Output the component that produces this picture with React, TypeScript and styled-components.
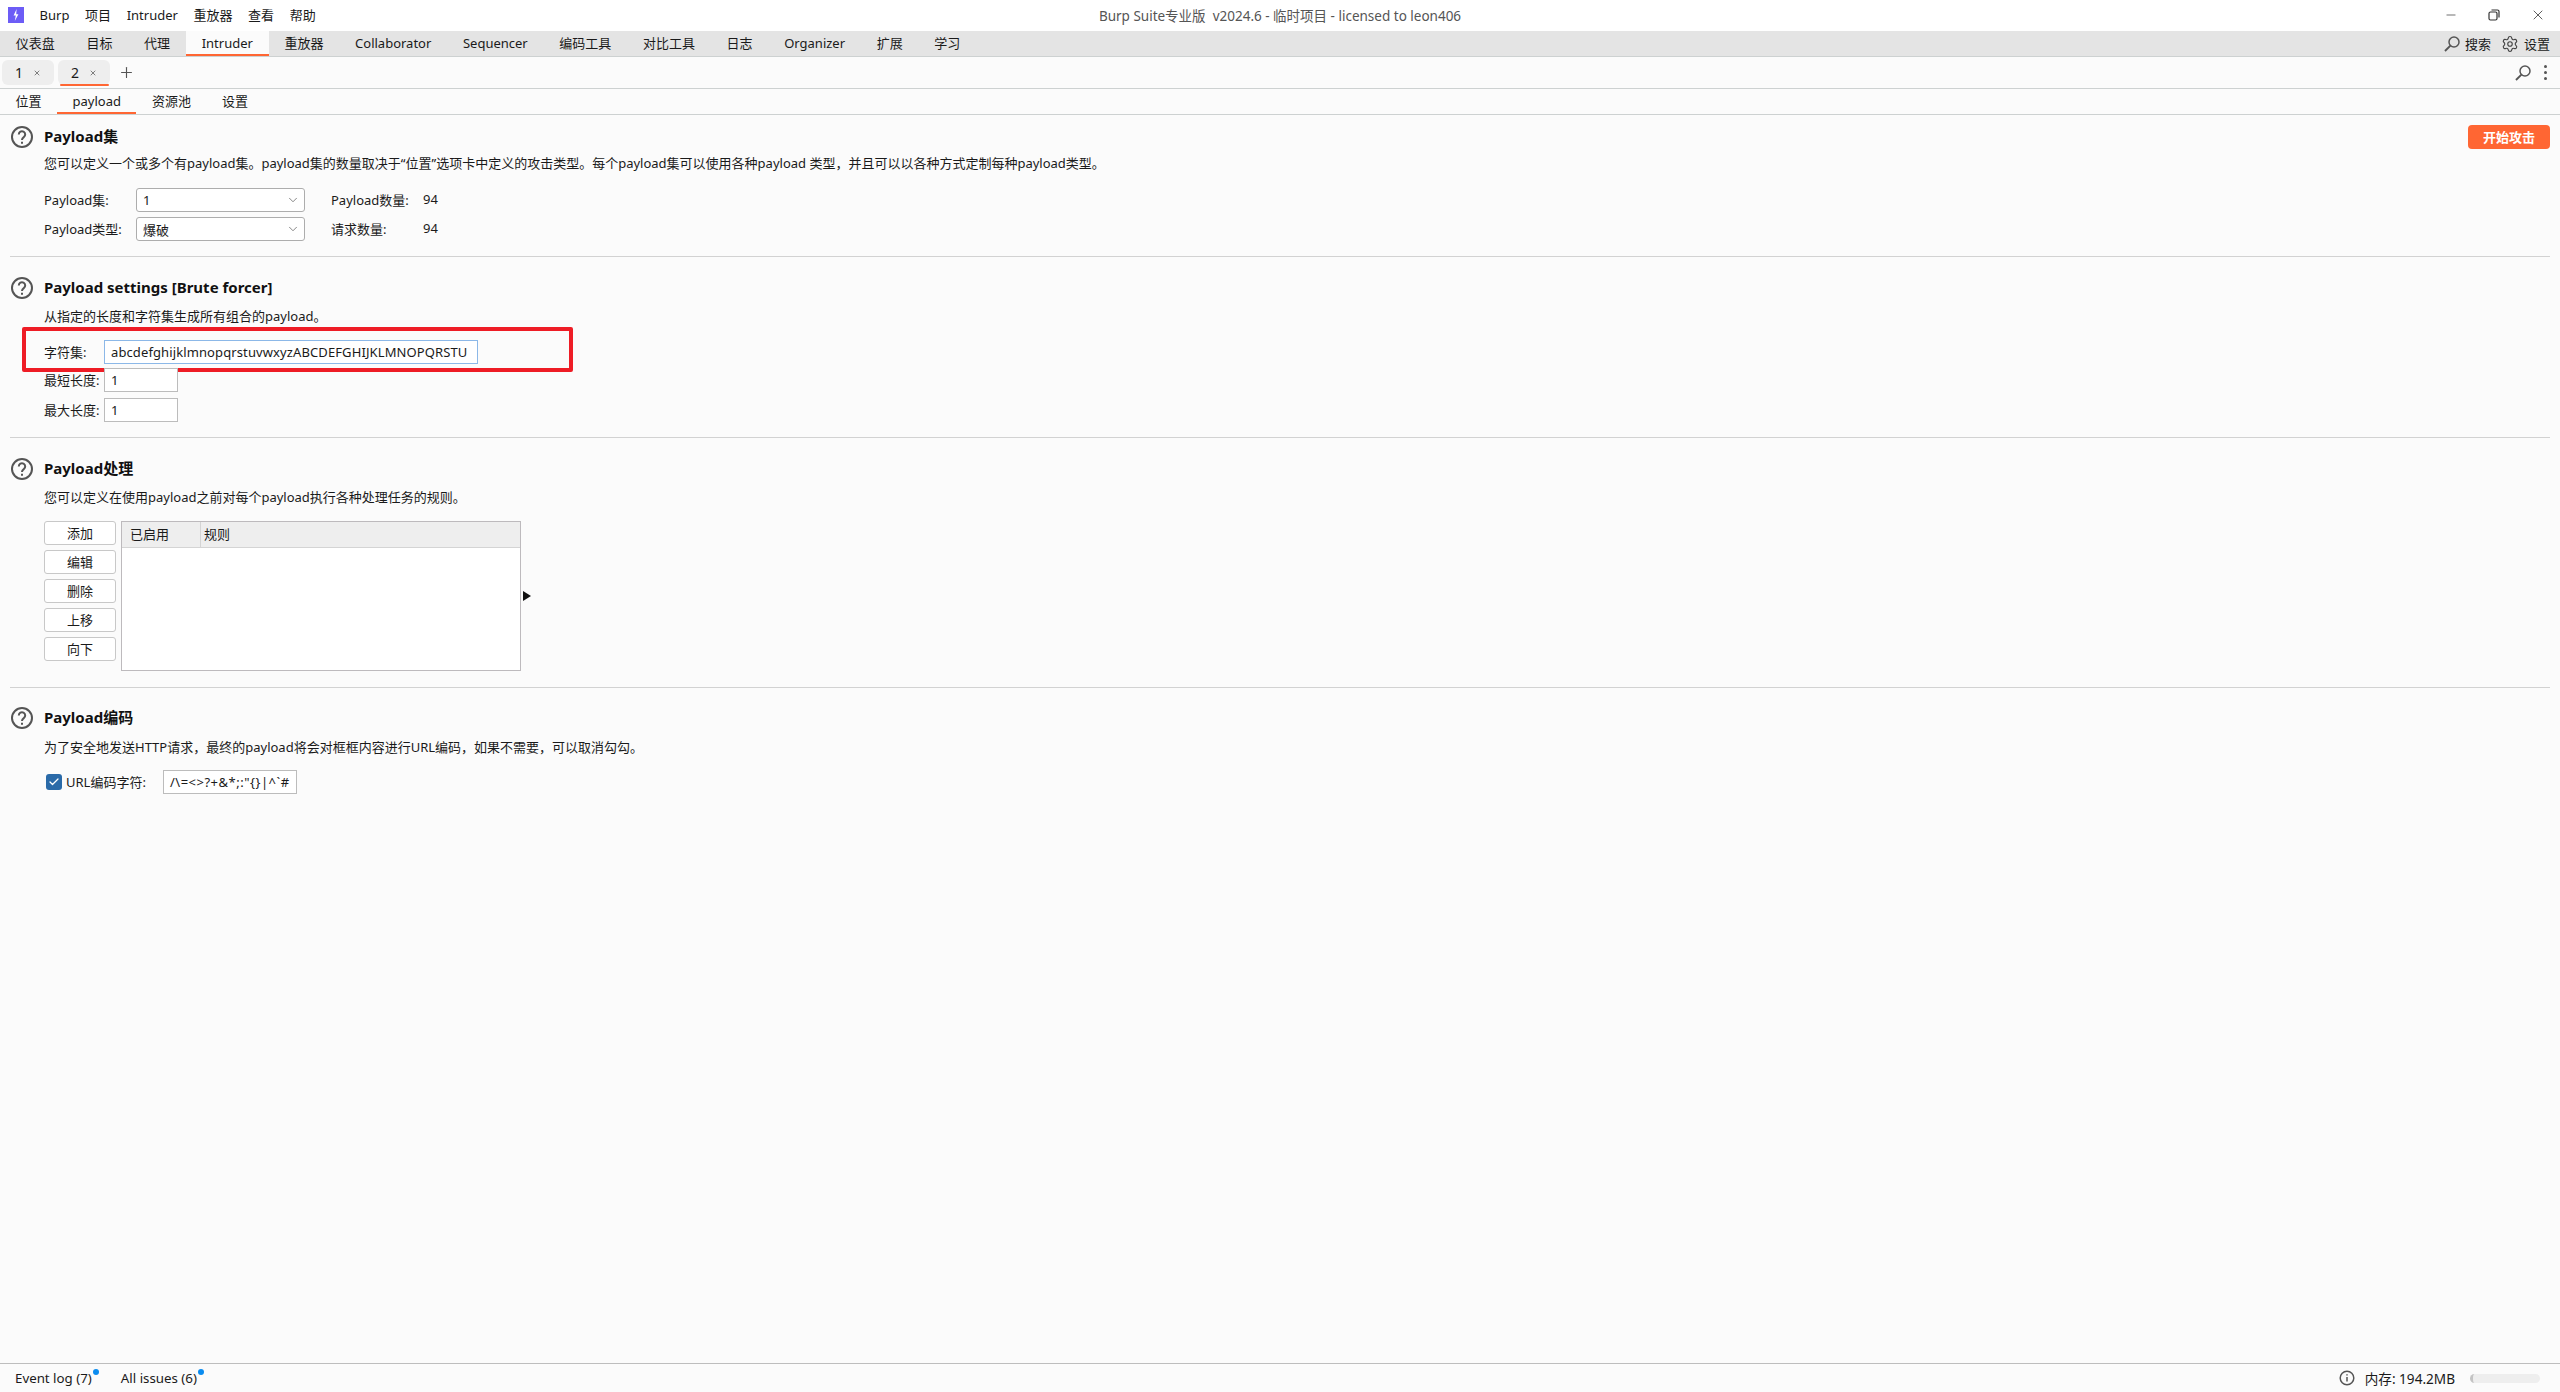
import styled, { createGlobalStyle } from "styled-components"
import { Check, ChevronDown, Minus, Plus, Settings, X } from "lucide-react"

const GlobalStyle = createGlobalStyle`
  html, body {
    margin: 0;
    padding: 0;
    background: #fbfbfb;
  }
  * {
    box-sizing: border-box;
  }
`

const Window = styled.div`
  display: flex;
  flex-direction: column;
  width: 2560px;
  height: 1392px;
  overflow: hidden;
  background: #fbfbfb;
  color: #1a1a1a;
  font-family: "Noto Sans", "Noto Sans CJK SC", sans-serif;
  font-size: 13px;
`

const TitleBar = styled.div`
  display: grid;
  grid-template-columns: 1fr auto 1fr;
  align-items: center;
  height: 31px;
  padding-bottom: 2px;
  background: #ffffff;
`

const MenuGroup = styled.div`
  display: flex;
  align-items: center;
  gap: 15.6px;
  padding-left: 8px;
`

const Logo = styled.svg`
  width: 16px;
  height: 16px;
`

const MenuItem = styled.span``

const WindowTitle = styled.div`
  color: #555555;
  font-size: 13.5px;
  white-space: pre;
`

const WindowControls = styled.div`
  display: flex;
  justify-content: flex-end;
  align-items: center;
  gap: 28px;
  padding-right: 14px;
  color: #333333;
`

const RestoreIcon = styled.svg`
  width: 16px;
  height: 16px;
`

const NavBar = styled.div`
  display: flex;
  align-items: stretch;
  height: 26px;
  background: #e4e4e4;
  border-bottom: 1px solid #cdd1d1;
`

const NavTab = styled.div<{ $active?: boolean }>`
  display: flex;
  align-items: center;
  padding: 0 15.8px;
  background: ${(p) => (p.$active ? "#fbfbfb" : "transparent")};
  border-bottom: 2px solid ${(p) => (p.$active ? "#ff6633" : "transparent")};
`

const NavActions = styled.div`
  display: flex;
  align-items: center;
  gap: 10px;
  margin-left: auto;
  padding-right: 10px;
`

const NavAction = styled.div`
  display: flex;
  align-items: center;
  gap: 5px;
`

const SearchSvg = styled.svg`
  width: 16px;
  height: 16px;
`

const GearIcon = styled(Settings)`
  color: #444444;
`

const TabRow = styled.div`
  display: flex;
  align-items: center;
  height: 32px;
  padding-left: 2px;
  border-bottom: 1px solid #cdd1d1;
`

const RepeatTab = styled.div<{ $active?: boolean }>`
  position: relative;
  display: flex;
  align-items: center;
  justify-content: center;
  gap: 10px;
  width: 52px;
  height: 25px;
  margin-right: 4px;
  background: #eeeeee;
  border-radius: 6px;
  font-size: 14px;
  &::after {
    content: "";
    display: ${(p) => (p.$active ? "block" : "none")};
    position: absolute;
    left: 2px;
    right: 1px;
    bottom: -1px;
    height: 2px;
    border-radius: 1px;
    background: #ff6633;
  }
`

const TabClose = styled(X)`
  color: #444444;
`

const AddTab = styled(Plus)`
  margin-left: 4px;
  color: #555555;
`

const RowActions = styled.div`
  display: flex;
  align-items: center;
  gap: 13px;
  margin-left: auto;
  padding-right: 13px;
`

const MoreDots = styled.div`
  display: flex;
  flex-direction: column;
  gap: 3px;
  span {
    width: 3px;
    height: 3px;
    border-radius: 50%;
    background: #555555;
  }
`

const SubTabRow = styled.div`
  display: flex;
  align-items: stretch;
  height: 26px;
  border-bottom: 1px solid #cdd1d1;
`

const SubTab = styled.div<{ $active?: boolean }>`
  display: flex;
  align-items: center;
  padding: 0 15.5px;
  border-bottom: 2px solid ${(p) => (p.$active ? "#ff6633" : "transparent")};
`

const Main = styled.div`
  flex: 1;
  min-height: 0;
`

const Section = styled.section<{ $top: number; $bottom: number }>`
  display: grid;
  grid-template-columns: 34px 1fr;
  margin: 0 10px;
  padding: ${(p) => p.$top}px 0 ${(p) => p.$bottom}px;
  border-bottom: 1px solid #d2d2d2;
`

const NoDivider = styled(Section)`
  border-bottom: none;
`

const HelpSvg = styled.svg`
  width: 24px;
  height: 24px;
  margin-top: -2px;
`

const SectionBody = styled.div`
  display: flex;
  flex-direction: column;
`

const TitleLine = styled.div`
  display: flex;
  justify-content: space-between;
  align-items: flex-start;
  height: 20px;
`

const SectionTitle = styled.div`
  height: 20px;
  font-size: 15px;
  font-weight: 700;
  line-height: 18px;
  color: #111111;
`

const StartButton = styled.button`
  width: 82px;
  height: 24px;
  margin-top: -2px;
  padding: 0 0 1px;
  border: none;
  border-radius: 4px;
  background: #ff6633;
  color: #ffffff;
  font: inherit;
  font-weight: 600;
`

const Description = styled.div<{ $gap: number }>`
  height: 20px;
  margin-top: ${(p) => p.$gap}px;
  line-height: 18px;
`

const FormGrid = styled.div`
  display: grid;
  grid-template-columns: 92px 169px 26px 92px auto;
  grid-auto-rows: 24px;
  row-gap: 5px;
  align-items: center;
  justify-content: start;
  margin-top: 14px;
`

const FormText = styled.span`
  padding-bottom: 2px;
`

const Select = styled.div`
  display: flex;
  align-items: center;
  justify-content: space-between;
  height: 24px;
  padding: 0 4px 0 6px;
  background: #ffffff;
  border: 1px solid #adadad;
  border-radius: 3px;
  svg {
    color: #555555;
  }
`

const Spacer = styled.span``

const FieldRow = styled.div<{ $top: number }>`
  position: relative;
  display: flex;
  align-items: center;
  height: 24px;
  margin-top: ${(p) => p.$top}px;
`

const FieldLabel = styled.div`
  width: 60px;
  padding-bottom: 2px;
`

const TextInput = styled.div<{ $width: number; $focused?: boolean; $spacing?: number }>`
  display: flex;
  align-items: center;
  width: ${(p) => p.$width}px;
  height: 24px;
  padding: 0 6px;
  background: #ffffff;
  border: 1px solid ${(p) => (p.$focused ? "#8cb8e8" : "#bcbcbc")};
  letter-spacing: ${(p) => p.$spacing ?? 0}px;
  white-space: nowrap;
  overflow: hidden;
`

const RedBox = styled.div`
  position: absolute;
  left: -22px;
  top: -13px;
  width: 551px;
  height: 45px;
  border: 4px solid #ee1c25;
  border-radius: 2px;
  pointer-events: none;
`

const RulesPanel = styled.div`
  display: flex;
  align-items: flex-start;
  margin-top: 13px;
`

const ButtonColumn = styled.div`
  display: flex;
  flex-direction: column;
  gap: 5px;
  margin-right: 5px;
`

const RuleButton = styled.button`
  width: 72px;
  height: 24px;
  padding: 0 0 2px;
  background: #ffffff;
  border: 1px solid #c8c8c8;
  border-radius: 3px;
  color: inherit;
  font: inherit;
`

const RulesTable = styled.div`
  width: 400px;
  height: 150px;
  background: #ffffff;
  border: 1px solid #bdbabd;
`

const TableHead = styled.div`
  display: flex;
  height: 26px;
  background: #eeeeee;
  border-bottom: 1px solid #d4d4d4;
`

const HeadCell = styled.div<{ $width?: number }>`
  display: flex;
  align-items: center;
  width: ${(p) => (p.$width ? `${p.$width}px` : "auto")};
  padding: 0 8px 2px ${(p) => (p.$width ? 8 : 3)}px;
  border-right: ${(p) => (p.$width ? "1px solid #d4d4d4" : "none")};
`

const ExpandArrow = styled.div`
  align-self: center;
  width: 0;
  height: 0;
  margin: 0 0 0 2px;
  border-top: 5px solid transparent;
  border-bottom: 5px solid transparent;
  border-left: 8px solid #111111;
`

const EncodeRow = styled.div`
  display: flex;
  align-items: center;
  margin-top: 12px;
`

const CheckBox = styled.div`
  display: flex;
  align-items: center;
  justify-content: center;
  width: 16px;
  height: 16px;
  margin: 0 4px 0 2px;
  background: #2a6aa8;
  border-radius: 3px;
  color: #ffffff;
`

const EncodeLabel = styled.div`
  width: 97px;
  padding-bottom: 2px;
`

const StatusBar = styled.div`
  display: flex;
  align-items: center;
  height: 29px;
  padding: 0 20px 0 15px;
  border-top: 1px solid #bdbdbd;
  font-size: 13.3px;
`

const StatusItem = styled.div`
  position: relative;
  margin-right: 29px;
`

const Dot = styled.span`
  position: absolute;
  top: 0;
  right: -7px;
  width: 6px;
  height: 6px;
  border-radius: 50%;
  background: #0a8cf0;
`

const MemoryGroup = styled.div`
  display: flex;
  align-items: center;
  margin-left: auto;
`

const InfoSvg = styled.svg`
  width: 16px;
  height: 16px;
  margin-right: 10px;
`

const MemoryText = styled.span`
  font-size: 13.6px;
`

const MemoryBar = styled.div`
  width: 70px;
  height: 9px;
  margin-left: 15px;
  border-radius: 5px;
  background: #eeeeee;
  border-left: 3px solid #c4c4c4;
`

const navItems = ["仪表盘", "目标", "代理", "Intruder", "重放器", "Collaborator", "Sequencer", "编码工具", "对比工具", "日志", "Organizer", "扩展", "学习"]
const menuItems = ["Burp", "项目", "Intruder", "重放器", "查看", "帮助"]
const subTabs = ["位置", "payload", "资源池", "设置"]
const ruleButtons = ["添加", "编辑", "删除", "上移", "向下"]

const HelpIcon = () => (
  <HelpSvg viewBox="0 0 24 24" fill="none" stroke="#555555" strokeWidth="2">
    <circle cx="12" cy="12" r="10" />
    <path d="M8.8 9.4a3.2 3.2 0 1 1 5 2.7c-1.1.8-1.8 1.4-1.8 2.9" />
    <path d="M12 16.8v2" />
  </HelpSvg>
)

const SearchIcon = () => (
  <SearchSvg viewBox="0 0 16 16" fill="none" stroke="#555555" strokeWidth="1.5">
    <circle cx="10" cy="6" r="5" />
    <path d="M6.4 9.6 1 15" strokeWidth="1.9" />
  </SearchSvg>
)

const App = () => (
  <Window>
    <GlobalStyle />
    <TitleBar>
      <MenuGroup>
        <Logo viewBox="0 0 16 16">
          <rect width="16" height="16" fill="#6c5cf6" />
          <path d="M8.6 2 5.6 8.4h2.2L6.8 14l3.6-6.8H8.2z" fill="#ffffff" />
        </Logo>
        {menuItems.map((item) => (
          <MenuItem key={item}>{item}</MenuItem>
        ))}
      </MenuGroup>
      <WindowTitle>{"Burp Suite专业版  v2024.6 - 临时项目 - licensed to leon406"}</WindowTitle>
      <WindowControls>
        <Minus size={14} strokeWidth={1.2} />
        <RestoreIcon viewBox="0 0 16 16" fill="none" stroke="currentColor" strokeWidth="1.2">
          <rect x="3" y="5" width="8" height="8" rx="1.5" />
          <path d="M5.5 3h6a1.5 1.5 0 0 1 1.5 1.5v6" />
        </RestoreIcon>
        <X size={16} strokeWidth={1.2} />
      </WindowControls>
    </TitleBar>

    <NavBar>
      {navItems.map((item) => (
        <NavTab key={item} $active={item === "Intruder"}>
          {item}
        </NavTab>
      ))}
      <NavActions>
        <NavAction>
          <SearchIcon />
          搜索
        </NavAction>
        <NavAction>
          <GearIcon size={18} strokeWidth={1.5} />
          设置
        </NavAction>
      </NavActions>
    </NavBar>

    <TabRow>
      <RepeatTab>
        1<TabClose size={8} strokeWidth={2} />
      </RepeatTab>
      <RepeatTab $active>
        2<TabClose size={8} strokeWidth={2} />
      </RepeatTab>
      <AddTab size={17} strokeWidth={1.6} />
      <RowActions>
        <SearchIcon />
        <MoreDots>
          <span />
          <span />
          <span />
        </MoreDots>
      </RowActions>
    </TabRow>

    <SubTabRow>
      {subTabs.map((item) => (
        <SubTab key={item} $active={item === "payload"}>
          {item}
        </SubTab>
      ))}
    </SubTabRow>

    <Main>
      <Section $top={12} $bottom={15}>
        <HelpIcon />
        <SectionBody>
          <TitleLine>
            <SectionTitle>Payload集</SectionTitle>
            <StartButton>开始攻击</StartButton>
          </TitleLine>
          <Description $gap={7}>
            您可以定义一个或多个有payload集。payload集的数量取决于“位置”选项卡中定义的攻击类型。每个payload集可以使用各种payload 类型，并且可以以各种方式定制每种payload类型。
          </Description>
          <FormGrid>
            <FormText>Payload集:</FormText>
            <Select>
              1
              <ChevronDown size={14} strokeWidth={1.2} />
            </Select>
            <Spacer />
            <FormText>Payload数量:</FormText>
            <FormText>94</FormText>
            <FormText>Payload类型:</FormText>
            <Select>
              爆破
              <ChevronDown size={14} strokeWidth={1.2} />
            </Select>
            <Spacer />
            <FormText>请求数量:</FormText>
            <FormText>94</FormText>
          </FormGrid>
        </SectionBody>
      </Section>

      <Section $top={21} $bottom={15}>
        <HelpIcon />
        <SectionBody>
          <SectionTitle>Payload settings [Brute forcer]</SectionTitle>
          <Description $gap={9}>从指定的长度和字符集生成所有组合的payload。</Description>
          <FieldRow $top={13}>
            <FieldLabel>字符集:</FieldLabel>
            <TextInput $width={374} $focused $spacing={0.11}>
              abcdefghijklmnopqrstuvwxyzABCDEFGHIJKLMNOPQRSTU
            </TextInput>
            <RedBox />
          </FieldRow>
          <FieldRow $top={4}>
            <FieldLabel>最短长度:</FieldLabel>
            <TextInput $width={74}>1</TextInput>
          </FieldRow>
          <FieldRow $top={6}>
            <FieldLabel>最大长度:</FieldLabel>
            <TextInput $width={74}>1</TextInput>
          </FieldRow>
        </SectionBody>
      </Section>

      <Section $top={21} $bottom={16}>
        <HelpIcon />
        <SectionBody>
          <SectionTitle>Payload处理</SectionTitle>
          <Description $gap={9}>您可以定义在使用payload之前对每个payload执行各种处理任务的规则。</Description>
          <RulesPanel>
            <ButtonColumn>
              {ruleButtons.map((label) => (
                <RuleButton key={label}>{label}</RuleButton>
              ))}
            </ButtonColumn>
            <RulesTable>
              <TableHead>
                <HeadCell $width={79}>已启用</HeadCell>
                <HeadCell>规则</HeadCell>
              </TableHead>
            </RulesTable>
            <ExpandArrow />
          </RulesPanel>
        </SectionBody>
      </Section>

      <NoDivider $top={20} $bottom={0}>
        <HelpIcon />
        <SectionBody>
          <SectionTitle>Payload编码</SectionTitle>
          <Description $gap={10}>为了安全地发送HTTP请求，最终的payload将会对框框内容进行URL编码，如果不需要，可以取消勾勾。</Description>
          <EncodeRow>
            <CheckBox>
              <Check size={12} strokeWidth={2.5} />
            </CheckBox>
            <EncodeLabel>URL编码字符:</EncodeLabel>
            <TextInput $width={134} $spacing={0.5}>{"/\\=<>?+&*;:\"{}|^`#"}</TextInput>
          </EncodeRow>
        </SectionBody>
      </NoDivider>
    </Main>

    <StatusBar>
      <StatusItem>
        Event log (7)
        <Dot />
      </StatusItem>
      <StatusItem>
        All issues (6)
        <Dot />
      </StatusItem>
      <MemoryGroup>
        <InfoSvg viewBox="0 0 16 16" fill="none" stroke="#555555" strokeWidth="1.5">
          <circle cx="8" cy="8" r="6.8" />
          <path d="M8 7v4.5M8 4.2v1.4" />
        </InfoSvg>
        <MemoryText>内存: 194.2MB</MemoryText>
        <MemoryBar />
      </MemoryGroup>
    </StatusBar>
  </Window>
)

export default App
